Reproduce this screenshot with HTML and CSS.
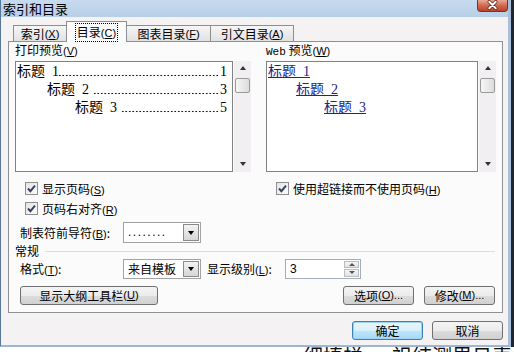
FILE: index.html
```html
<!DOCTYPE html>
<html lang="zh-CN">
<head>
<meta charset="utf-8">
<title>索引和目录</title>
<link rel="stylesheet" href="styles.css">
</head>
<body>
<div class="screen">
  <div class="dialog">
    <div class="titlebar">
      <span class="title">索引和目录</span>
      <span class="close">
        <svg width="31" height="12" viewBox="0 0 31 12"><path d="M12 2.5 L19 9.5 M19 2.5 L12 9.5" stroke="#6b2418" stroke-width="3.6" stroke-linecap="round"/><path d="M12 2.5 L19 9.5 M19 2.5 L12 9.5" stroke="#ffffff" stroke-width="2" stroke-linecap="round"/></svg>
      </span>
    </div>
    <div class="client">
      <div class="tabs">
        <div class="tab t1">索引<span class="mn">(<u>X</u>)</span></div>
        <div class="tab t2 active"><span class="focus">目录<span class="mn">(<u>C</u>)</span></span></div>
        <div class="tab t3">图表目录<span class="mn">(<u>F</u>)</span></div>
        <div class="tab t4">引文目录<span class="mn">(<u>A</u>)</span></div>
      </div>
      <div class="panel">
        <div class="previews">
          <div class="col col-print">
            <div class="label">打印预览<span class="mn">(<u>V</u>)</span></div>
            <div class="preview">
              <div class="list print-list">
                <div class="entry lv1"><span class="t">标题&nbsp;&nbsp;1</span><span class="dots"></span><span class="n">1</span></div>
                <div class="entry lv2"><span class="t">标题&nbsp;&nbsp;2</span><span class="dots spaced"></span><span class="n">3</span></div>
                <div class="entry lv3"><span class="t">标题&nbsp;&nbsp;3</span><span class="dots spaced"></span><span class="n">5</span></div>
              </div>
              <div class="vscroll">
                <span class="arr up"></span>
                <span class="thumb"></span>
                <span class="spacer"></span>
                <span class="arr down"></span>
              </div>
            </div>
            <div class="check first">
              <span class="box"><svg width="13" height="13" viewBox="0 0 13 13"><path d="M3 6.5 L5.4 9.2 L10 3.6" fill="none" stroke="#34405e" stroke-width="1.9"/></svg></span>
              <span>显示页码<span class="mn">(<u>S</u>)</span></span>
            </div>
            <div class="check second">
              <span class="box"><svg width="13" height="13" viewBox="0 0 13 13"><path d="M3 6.5 L5.4 9.2 L10 3.6" fill="none" stroke="#34405e" stroke-width="1.9"/></svg></span>
              <span>页码右对齐<span class="mn">(<u>R</u>)</span></span>
            </div>
            <div class="field-row leader-row">
              <span class="field-label">制表符前导符<span class="mn">(<u>B</u>)</span>:</span>
              <div class="combo">
                <span class="val dotsval">........</span>
                <span class="drop"><span class="tri"></span></span>
              </div>
            </div>
          </div>
          <div class="col col-web">
            <div class="label"><span class="mono">Web</span> 预览<span class="mn">(<u>W</u>)</span></div>
            <div class="preview">
              <div class="list web-list">
                <div class="link lv1">标题&nbsp;&nbsp;1</div>
                <div class="link lv2">标题&nbsp;&nbsp;2</div>
                <div class="link lv3">标题&nbsp;&nbsp;3</div>
              </div>
              <div class="vscroll">
                <span class="arr up"></span>
                <span class="thumb"></span>
                <span class="spacer"></span>
                <span class="arr down"></span>
              </div>
            </div>
            <div class="check first">
              <span class="box"><svg width="13" height="13" viewBox="0 0 13 13"><path d="M3 6.5 L5.4 9.2 L10 3.6" fill="none" stroke="#34405e" stroke-width="1.9"/></svg></span>
              <span>使用超链接而不使用页码<span class="mn">(<u>H</u>)</span></span>
            </div>
          </div>
        </div>
        <div class="general">
          <div class="group-head"><span>常规</span><span class="rule"></span></div>
          <div class="field-row format-row">
            <span class="field-label">格式<span class="mn">(<u>T</u>)</span>:</span>
            <div class="combo">
              <span class="val">来自模板</span>
              <span class="drop"><span class="tri"></span></span>
            </div>
            <span class="level-label">显示级别<span class="mn">(<u>L</u>)</span>:</span>
            <div class="spin">
              <span class="val num">3</span>
              <span class="spin-btns"><span class="sb"><span class="tri-up"></span></span><span class="sb"><span class="tri"></span></span></span>
            </div>
          </div>
          <div class="btn-row">
            <span class="btn outline-btn">显示大纲工具栏<span class="mn">(<u>U</u>)</span></span>
            <span class="btn small-btn push">选项<span class="mn">(<u>O</u>)...</span></span>
            <span class="btn small-btn">修改<span class="mn">(<u>M</u>)...</span></span>
          </div>
        </div>
      </div>
      <div class="footer">
        <span class="btn footer-btn default">确定</span>
        <span class="btn footer-btn">取消</span>
      </div>
    </div>
  </div>
  <div class="edge-right"></div>
</div>
<div class="below">
  <span class="blk"></span>
  <span class="frag">细填栏 · 祖结测里日表山 8 5</span>
</div>
</body>
</html>
```
FILE: styles.css
```css
* { box-sizing: border-box; }
html, body { margin: 0; padding: 0; }
body {
  width: 514px;
  height: 352px;
  overflow: hidden;
  background: #ffffff;
  font-family: "Noto Sans CJK SC", "Liberation Sans", sans-serif;
  font-size: 12px;
  color: #000;
}
.screen { display: flex; height: 347px; }
.dialog {
  width: 511px;
  height: 347px;
  display: flex;
  flex-direction: column;
  background: #f4f2f2;
  border-left: 1px solid #56769a;
  border-right: 3px solid #a9bfd9;
  border-bottom: 2px solid #9fb6d2;
}
.edge-right { width: 3px; background: #1f2630; }

.titlebar {
  height: 17px;
  display: flex;
  align-items: flex-start;
  justify-content: space-between;
  background: linear-gradient(#c7daee, #b8cfe8);
}
.title { font-size: 13px; line-height: 17px; padding-left: 2px; color: #000; }
.close {
  width: 31px;
  height: 12px;
  display: flex;
  border: 1px solid #7b3226;
  border-top: none;
  border-radius: 0 0 4px 4px;
  background: linear-gradient(#e8a995, #d1694f 50%, #b9432b);
  overflow: hidden;
}
.close svg { display: block; margin-top: -1px; }

.client {
  flex: 1;
  display: flex;
  flex-direction: column;
  padding: 0 5px 5px 7px;
}

.mn { font-family: "Liberation Sans", sans-serif; font-size: 11px; }
.mn u { text-decoration: underline; text-underline-offset: 1px; }

/* tabs */
.tabs {
  height: 24px;
  display: flex;
  align-items: flex-end;
  padding-left: 5px;
  position: relative;
  z-index: 1;
}
.tab {
  height: 16px;
  display: flex;
  align-items: center;
  justify-content: center;
  border: 1px solid #8c8e94;
  border-bottom: none;
  background: linear-gradient(#f6f6f6, #e1e1e1);
  line-height: 14px;
  margin-right: -1px;
}
.t1 { width: 54px; }
.t2 { width: 61px; }
.t3 { width: 85px; }
.t4 { width: 84px; }
.tab.active {
  height: 21px;
  margin-bottom: -1px;
  background: #fbfbfb;
  position: relative;
  z-index: 2;
}
.focus { outline: 1px dotted #000; outline-offset: 0; padding: 0 1px; line-height: 15px; }

/* panel */
.panel {
  height: 272px;
  border: 1px solid #8e9094;
  background: #fbfbfb;
  padding: 0 5px 7px 6px;
  display: flex;
  flex-direction: column;
}
.previews { display: flex; gap: 13px; }
.col { display: flex; flex-direction: column; }
.col-print { width: 238px; }
.col-web { width: 231px; }
.label { height: 16px; line-height: 16px; }
.mono { font-family: "Liberation Mono", monospace; font-size: 11px; }

.preview { display: flex; margin-top: 3px; height: 111px; }
.list {
  border: 1px solid #828282;
  background: #ffffff;
  padding-top: 1px;
  font-family: "Liberation Serif", "Noto Sans CJK SC", serif;
  font-size: 14px;
  line-height: 18px;
}
.print-list { width: 218px; padding-right: 5px; padding-left: 1px; }
.web-list { width: 212px; padding-left: 1px; }
.entry { display: flex; white-space: nowrap; height: 18px; }
.entry .t { flex: none; }
.entry .dots {
  flex: 1;
  margin-right: 1px;
  background-image: radial-gradient(circle, #1a1a1a 0.75px, transparent 1.1px);
  background-size: 3.5px 3px;
  background-repeat: repeat-x;
  background-position: right 0 bottom 4px;
}
.entry .dots.spaced { margin-left: 4px; }
.entry .n { flex: none; }
.lv1 { padding-left: 0; }
.lv2 { padding-left: 30px; }
.lv3 { padding-left: 58px; }
.link { color: #23238c; text-decoration: underline; text-underline-offset: 1px; }
.web-list .lv2 { padding-left: 28px; }
.web-list .lv3 { padding-left: 56px; }

.vscroll {
  width: 17px;
  margin-left: 1px;
  background: #f1eff2;
  display: flex;
  flex-direction: column;
  align-items: center;
  padding: 5px 1px 6px;
}
.arr { width: 0; height: 0; border-left: 3.5px solid transparent; border-right: 3.5px solid transparent; }
.arr.up { border-bottom: 4px solid #333; }
.arr.down { border-top: 4px solid #333; }
.thumb {
  width: 15px;
  height: 15px;
  margin-top: 8px;
  border: 1px solid #9a9a9a;
  border-radius: 2px;
  background: linear-gradient(90deg, #f6f6f6, #dcdcdc);
}
.spacer { flex: 1; }

.check { display: flex; align-items: center; height: 16px; padding-left: 10px; }
.check.first { margin-top: 8px; }
.check.second { margin-top: 4px; }
.box {
  width: 13px;
  height: 13px;
  margin-right: 4px;
  border: 1px solid #8f8f8f;
  background: linear-gradient(135deg, #e4e4e4, #fbfbfb);
  display: flex;
}
.box svg { margin: -1px; }

.field-row { display: flex; align-items: center; }
.leader-row { margin-top: 6px; height: 21px; }
.field-label { width: 108px; padding-left: 5px; }
.combo {
  width: 78px;
  height: 21px;
  border: 1px solid #a3a3a3;
  background: #fff;
  display: flex;
  align-items: stretch;
}
.combo .val { flex: 1; padding-left: 4px; line-height: 19px; }
.dotsval { font-family: "Liberation Sans", sans-serif; letter-spacing: 1.5px; }
.drop {
  width: 16px;
  margin: 1px;
  border: 1px solid #8a8a8a;
  background: linear-gradient(#f3f3f3, #d6d6d6);
  display: flex;
  align-items: center;
  justify-content: center;
}
.tri { width: 0; height: 0; border-left: 3.5px solid transparent; border-right: 3.5px solid transparent; border-top: 4px solid #000; }
.tri-up { width: 0; height: 0; border-left: 3px solid transparent; border-right: 3px solid transparent; border-bottom: 3px solid #555; }
.spin-btns .tri { border-left-width: 3px; border-right-width: 3px; border-top: 3px solid #555; }

.general { display: flex; flex-direction: column; }
.group-head { margin-top: 1px; height: 14px; display: flex; align-items: center; line-height: 14px; }
.rule { flex: 1; height: 1px; background: #d8dee4; margin: 0 2px 0 6px; }
.format-row { height: 21px; }
.format-row .combo { height: 20px; }
.format-row .combo .val { line-height: 18px; }
.level-label { width: 78px; margin-left: 6px; }
.spin {
  width: 76px;
  height: 20px;
  border: 1px solid #a5acb5;
  background: #fff;
  display: flex;
}
.spin .val { flex: 1; padding-left: 4px; line-height: 18px; }
.num { font-family: "Liberation Sans", sans-serif; font-size: 12px; }
.spin-btns { width: 15px; margin: 1px; display: flex; flex-direction: column; gap: 1px; }
.sb {
  flex: 1;
  border: 1px solid #b9bec6;
  background: linear-gradient(#f6f6f6, #e2e2e2);
  display: flex;
  align-items: center;
  justify-content: center;
}

.btn-row { display: flex; margin-top: 7px; padding-right: 2px; }
.btn {
  height: 19px;
  display: flex;
  align-items: center;
  justify-content: center;
  border: 1px solid #707070;
  border-radius: 3px;
  background: linear-gradient(#f4f4f4 0%, #ebebeb 50%, #dddddd 51%, #d0d0d0 100%);
  line-height: 15px;
}
.outline-btn { width: 138px; margin-left: 5px; }
.small-btn { width: 71px; }
.push { margin-left: auto; margin-right: 10px; }

.footer { display: flex; justify-content: flex-end; gap: 9px; margin-top: 8px; }
.footer-btn { width: 71px; }
.default {
  border-color: #3c7fb1;
  box-shadow: inset 0 0 0 1px #9fd3f5;
  background: linear-gradient(#eaf6fd 0%, #d9f0fc 50%, #bee6fd 51%, #a7d9f5 100%);
}

.below { display: flex; height: 5px; overflow: hidden; background: #fff; }
.blk { width: 15px; margin-left: 148px; background: #4b5566; }
.frag {
  margin-left: 155px;
  font-size: 20px;
  line-height: 20px;
  margin-top: -1px;
  white-space: nowrap;
  color: #111;
}
```
